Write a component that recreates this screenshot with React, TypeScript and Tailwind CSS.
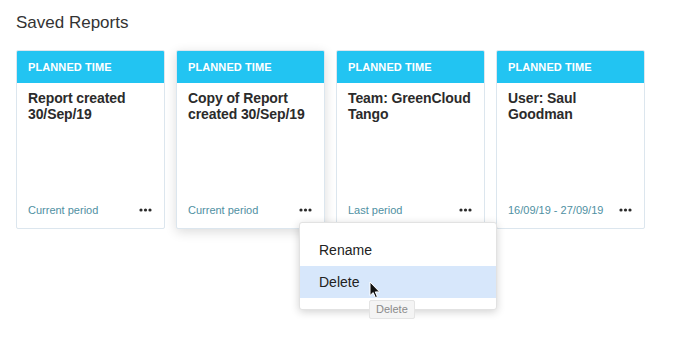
import { useState } from 'react';

interface Report {
  title: string;
  period: string;
}

const reports: Report[] = [
  { title: 'Report created 30/Sep/19', period: 'Current period' },
  { title: 'Copy of Report created 30/Sep/19', period: 'Current period' },
  { title: 'Team: GreenCloud Tango', period: 'Last period' },
  { title: 'User: Saul Goodman', period: '16/09/19 - 27/09/19' },
];

const Dots = () => (
  <svg width="13" height="4" viewBox="0 0 13 4" className="block">
    <circle cx="2" cy="2" r="1.6" fill="#2b2b2b" />
    <circle cx="6.5" cy="2" r="1.6" fill="#2b2b2b" />
    <circle cx="11" cy="2" r="1.6" fill="#2b2b2b" />
  </svg>
);

const Cursor = () => (
  <svg width="12" height="18" viewBox="0 0 12 18" className="absolute left-[369px] top-[281px]">
    <path
      d="M1 1 L1 14.5 L4.2 11.6 L6.4 16.6 L8.4 15.7 L6.3 10.9 L10.6 10.9 Z"
      fill="#111"
      stroke="#fff"
      strokeWidth="1"
      strokeLinejoin="round"
    />
  </svg>
);

const ReportCard = ({ report, hovered }: { report: Report; hovered: boolean }) => (
  <div
    className={`w-[149px] h-[179px] flex flex-col bg-white border border-[#dce6ee] rounded-[2px] overflow-hidden ${
      hovered ? 'shadow-[0_3px_12px_rgba(0,0,0,0.14)]' : ''
    }`}
  >
    <div className="h-[32px] shrink-0 bg-[#22c4f2] pl-[11px] flex items-center">
      <span className="text-[11px] font-bold text-white tracking-[0.1px]">PLANNED TIME</span>
    </div>
    <div className="pl-[11px] pr-[6px] pt-[7px] flex-1">
      <p className="text-[14px] leading-[16px] font-bold text-[#2b2b2b] tracking-[-0.1px]">{report.title}</p>
    </div>
    <div className="pl-[11px] pr-3 pb-[10px] flex items-center justify-between">
      <span className="text-[11px] text-[#4f90a2]">{report.period}</span>
      <Dots />
    </div>
  </div>
);

export default function App() {
  const [active] = useState<number>(1);

  return (
    <div
      className="relative w-[685px] h-[343px] bg-white overflow-hidden"
      style={{ fontFamily: '"Liberation Sans", Arial, sans-serif' }}
    >
      <div className="px-4 pt-[12px]">
        <h1 className="text-[17px] leading-[22px] text-[#333]">Saved Reports</h1>
        <div className="mt-[16px] flex gap-[11px]">
          {reports.map((r, i) => (
            <ReportCard key={r.title} report={r} hovered={i === active} />
          ))}
        </div>
      </div>

      {/* context menu */}
      <div className="absolute left-[299px] top-[222px] w-[198px] bg-white rounded-[3px] border border-[#e2e2e2] shadow-[0_2px_8px_rgba(0,0,0,0.18)] py-[11px]">
        <div className="h-[32px] px-[19px] flex items-center text-[14px] text-[#222]">Rename</div>
        <div className="h-[32px] px-[19px] flex items-center text-[14px] text-[#222] bg-[#d7e7fb]">Delete</div>
      </div>

      {/* tooltip */}
      <div className="absolute left-[369px] top-[300px] h-[19px] px-[6px] flex items-center bg-[#f4f4f4] border border-[#e4e4e4] rounded-[2px] text-[11px] text-[#8a8a8a]">
        Delete
      </div>

      <Cursor />
    </div>
  );
}
